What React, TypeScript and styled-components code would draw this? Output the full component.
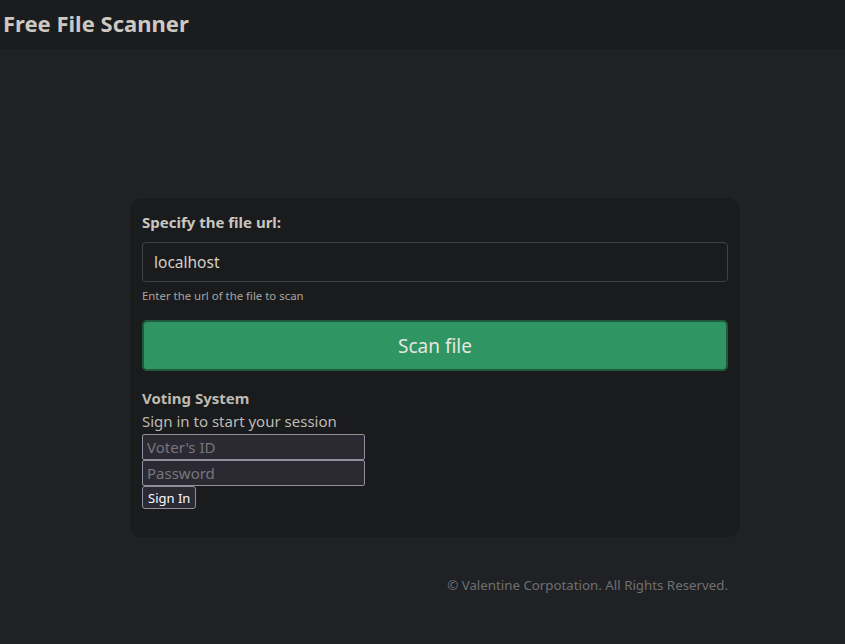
import React from "react";
import styled, { createGlobalStyle } from "styled-components";

const Global = createGlobalStyle`
  html, body { margin: 0; padding: 0; }
  body {
    background: #202124;
    font-family: "Noto Sans", "Open Sans", sans-serif;
    color: #c9c6c0;
    min-height: 644px;
  }
`;

const Header = styled.header`
  height: 49px;
  background: #1b1c1e;
  display: flex;
  align-items: center;
  padding: 0 3px 3px;
  box-sizing: border-box;
`;

const Title = styled.h1`
  margin: 0;
  font-size: 22px;
  font-weight: 700;
  color: #cdc9c2;
`;

const Main = styled.main`
  display: flex;
  flex-direction: column;
  align-items: flex-start;
  padding: 149px 0 0 130px;
`;

const Card = styled.section`
  width: 610px;
  box-sizing: border-box;
  background: #1a1b1d;
  border-radius: 12px;
  padding: 12px 12px 28px;
  display: flex;
  flex-direction: column;
`;

const Label = styled.label`
  font-size: 15px;
  font-weight: 700;
  color: #c9c6c0;
  line-height: 24px;
  margin-bottom: 8px;
`;

const UrlInput = styled.input`
  height: 40px;
  box-sizing: border-box;
  border: 1px solid #3f4144;
  border-radius: 4px;
  background: #1a1b1d;
  color: #d2cec8;
  font-family: inherit;
  font-size: 15.5px;
  padding: 0 11px;
  outline: none;
`;

const Help = styled.div`
  font-size: 11.4px;
  color: #a9a6a0;
  margin-top: 6px;
  line-height: 16px;
`;

const ScanButton = styled.button`
  margin-top: 16px;
  height: 51px;
  border: 2px solid #1f5a3d;
  border-radius: 5px;
  background: #2e9563;
  color: #e6e6e2;
  font-family: inherit;
  font-size: 19px;
`;

const VoteTitle = styled.div`
  margin-top: 16px;
  font-size: 15px;
  font-weight: 700;
  color: #bdbab4;
  line-height: 22px;
`;

const VoteSub = styled.div`
  font-size: 15px;
  color: #bdbab4;
  line-height: 24px;
  margin-bottom: 1px;
`;

const Field = styled.input`
  width: 223px;
  height: 26px;
  box-sizing: border-box;
  border: 1px solid #8f8f9d;
  border-radius: 2px;
  background: #2b2a33;
  color: #e8e6e3;
  font-family: inherit;
  font-size: 15px;
  padding: 0 4px;
  &::placeholder { color: #77767d; }
`;

const SignIn = styled.button`
  align-self: flex-start;
  height: 23px;
  box-sizing: border-box;
  border: 1px solid #8f8f9d;
  border-radius: 3px;
  background: #2b2a33;
  color: #fbfbfe;
  font-family: inherit;
  font-size: 13px;
  padding: 0 5px;
`;

const Footer = styled.footer`
  width: 610px;
  box-sizing: border-box;
  padding: 39px 12px 0;
  text-align: right;
  font-size: 13.3px;
  color: #6f7072;
`;

export default function App() {
  return (
    <>
      <Global />
      <Header>
        <Title>Free File Scanner</Title>
      </Header>
      <Main>
        <Card>
          <Label>Specify the file url:</Label>
          <UrlInput defaultValue="localhost" />
          <Help>Enter the url of the file to scan</Help>
          <ScanButton>Scan file</ScanButton>
          <VoteTitle>Voting System</VoteTitle>
          <VoteSub>Sign in to start your session</VoteSub>
          <Field placeholder="Voter's ID" />
          <Field type="password" placeholder="Password" />
          <SignIn>Sign In</SignIn>
        </Card>
        <Footer>© Valentine Corpotation. All Rights Reserved.</Footer>
      </Main>
    </>
  );
}
